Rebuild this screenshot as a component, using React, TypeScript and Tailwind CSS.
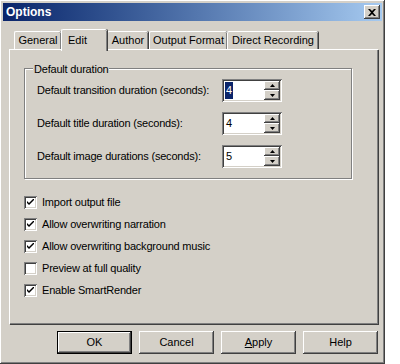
import { ReactNode } from "react";

const raised =
  "shadow-[inset_-1px_-1px_#404040,inset_1px_1px_#ffffff,inset_-2px_-2px_#808080,inset_2px_2px_#d4d0c8]";
const sunken =
  "shadow-[inset_1px_1px_#808080,inset_-1px_-1px_#ffffff,inset_2px_2px_#404040,inset_-2px_-2px_#d4d0c8]";

const tabs = [
  { label: "General", w: "w-[47px]", ml: "ml-[11px]" },
  { label: "Edit", w: "w-[46px]", ml: "ml-[0px]", active: true },
  { label: "Author", w: "w-[41px]", ml: "ml-[0px]" },
  { label: "Output Format", w: "w-[78px]", ml: "ml-[1px]" },
  { label: "Direct Recording", w: "w-[91px]", ml: "ml-[0px]" },
];

const durations = [
  { label: "Default transition duration (seconds):", value: "4", selected: true },
  { label: "Default title duration (seconds):", value: "4" },
  { label: "Default image durations (seconds):", value: "5" },
];

const options = [
  { label: "Import output file", checked: true },
  { label: "Allow overwriting narration", checked: true },
  { label: "Allow overwriting background music", checked: true },
  { label: "Preview at full quality", checked: false },
  { label: "Enable SmartRender", checked: true },
];

function Arrow({ up }: { up?: boolean }) {
  return (
    <svg width="5" height="3" viewBox="0 0 5 3">
      {up ? (
        <polygon points="2.5,0 5,3 0,3" fill="#000" />
      ) : (
        <polygon points="0,0 5,0 2.5,3" fill="#000" />
      )}
    </svg>
  );
}

function SpinBox({ value, selected }: { value: string; selected?: boolean }) {
  return (
    <div className={`flex h-[23px] w-[60px] bg-white p-[2px] ${sunken}`}>
      <div className="flex flex-1 items-center pl-[1px]">
        <span
          className={
            selected
              ? "bg-[#0a246a] px-[1px] text-white leading-[17px]"
              : "px-[1px] leading-[17px]"
          }
        >
          {value}
        </span>
      </div>
      <div className="flex w-[16px] flex-col">
        <div className={`flex h-[9px] items-center justify-center bg-[#d4d0c8] ${raised}`}>
          <Arrow up />
        </div>
        <div className={`flex h-[10px] items-center justify-center bg-[#d4d0c8] ${raised}`}>
          <Arrow />
        </div>
      </div>
    </div>
  );
}

function CheckBox({ checked }: { checked: boolean }) {
  return (
    <div className={`flex h-[13px] w-[13px] items-center justify-center bg-white ${sunken}`}>
      {checked && (
        <svg width="7" height="7" viewBox="0 0 7 7">
          <path d="M0 2 L0 4 L2 6 L7 1 L7 -1 L2 4 Z" fill="#000" />
        </svg>
      )}
    </div>
  );
}

function Button({ children, isDefault }: { children: ReactNode; isDefault?: boolean }) {
  return (
    <div
      className={`flex h-[23px] w-[75px] items-center justify-center bg-[#d4d0c8] ${
        isDefault
          ? "border border-black shadow-[inset_-1px_-1px_#404040,inset_1px_1px_#ffffff,inset_-2px_-2px_#808080]"
          : raised
      }`}
    >
      {children}
    </div>
  );
}

export default function App() {
  return (
    <div
      className="h-[364px] w-[400px] bg-white text-[11px] tracking-[-0.2px] text-black"
      style={{ fontFamily: '"Liberation Sans", Arial, sans-serif' }}
    >
      <div className={`flex h-[364px] w-[385px] flex-col bg-[#d4d0c8] p-[3px] ${raised}`}>
        {/* TITLE BAR */}

        <div className="flex h-[18px] items-center justify-between bg-gradient-to-r from-[#0a246a] to-[#a6caf0] pl-[3px] pr-[2px]">
          <span className="text-[12px] font-bold tracking-normal text-white">Options</span>
          <div className={`flex h-[14px] w-[16px] items-center justify-center bg-[#d4d0c8] ${raised}`}>
            <svg width="8" height="7" viewBox="0 0 8 7">
              <path d="M0 0 L2 0 L4 2 L6 0 L8 0 L5 3.5 L8 7 L6 7 L4 5 L2 7 L0 7 L3 3.5 Z" fill="#000" />
            </svg>
          </div>
        </div>

        {/* TABS */}

        <div className="mt-[7px] flex h-[21px] items-end tracking-normal">
          {tabs.map((tab) =>
            tab.active ? (
              <div
                key={tab.label}
                className={`relative z-10 -mb-[2px] flex h-[22px] ${tab.w} ${tab.ml} items-start rounded-t-[2px] border-l border-t border-white bg-[#d4d0c8] pl-[6px] pt-[2px] shadow-[inset_-1px_0_#808080,1px_0_#404040]`}
              >
                Edit
              </div>
            ) : (
              <div
                key={tab.label}
                className={`flex h-[18px] ${tab.w} ${tab.ml} items-center justify-center rounded-t-[2px] border-l border-t border-white shadow-[inset_-1px_0_#808080,1px_0_#404040]`}
              >
                {tab.label}
              </div>
            )
          )}
        </div>

        {/* PANEL */}

        <div className="ml-[6px] h-[275px] w-[369px] border-l border-t border-white pl-[14px] pt-[18px] shadow-[inset_-1px_-1px_#808080,1px_1px_#404040]">
          <div className="relative h-[111px] w-[328px] border border-[#808080] shadow-[inset_1px_1px_#ffffff,1px_1px_#ffffff]">
            <span className="absolute -top-[8px] left-[8px] bg-[#d4d0c8] px-[1px]">
              Default duration
            </span>
            <div className="flex flex-col gap-[10px] pl-[12px] pt-[10px]">
              {durations.map((d) => (
                <div key={d.label} className="flex h-[23px] items-center">
                  <span className="w-[185px]">{d.label}</span>
                  <SpinBox value={d.value} selected={d.selected} />
                </div>
              ))}
            </div>
          </div>

          <div className="mt-[12px] flex flex-col">
            {options.map((o) => (
              <div key={o.label} className="flex h-[22px] items-center gap-[5px]">
                <CheckBox checked={o.checked} />
                <span>{o.label}</span>
              </div>
            ))}
          </div>
        </div>

        {/* BUTTONS */}

        <div className="mt-[7px] flex justify-end gap-[7px] pr-[4px] tracking-normal">
          <Button isDefault>OK</Button>
          <Button>Cancel</Button>
          <Button>
            <span>
              <span className="underline">A</span>pply
            </span>
          </Button>
          <Button>Help</Button>
        </div>
      </div>
    </div>
  );
}
